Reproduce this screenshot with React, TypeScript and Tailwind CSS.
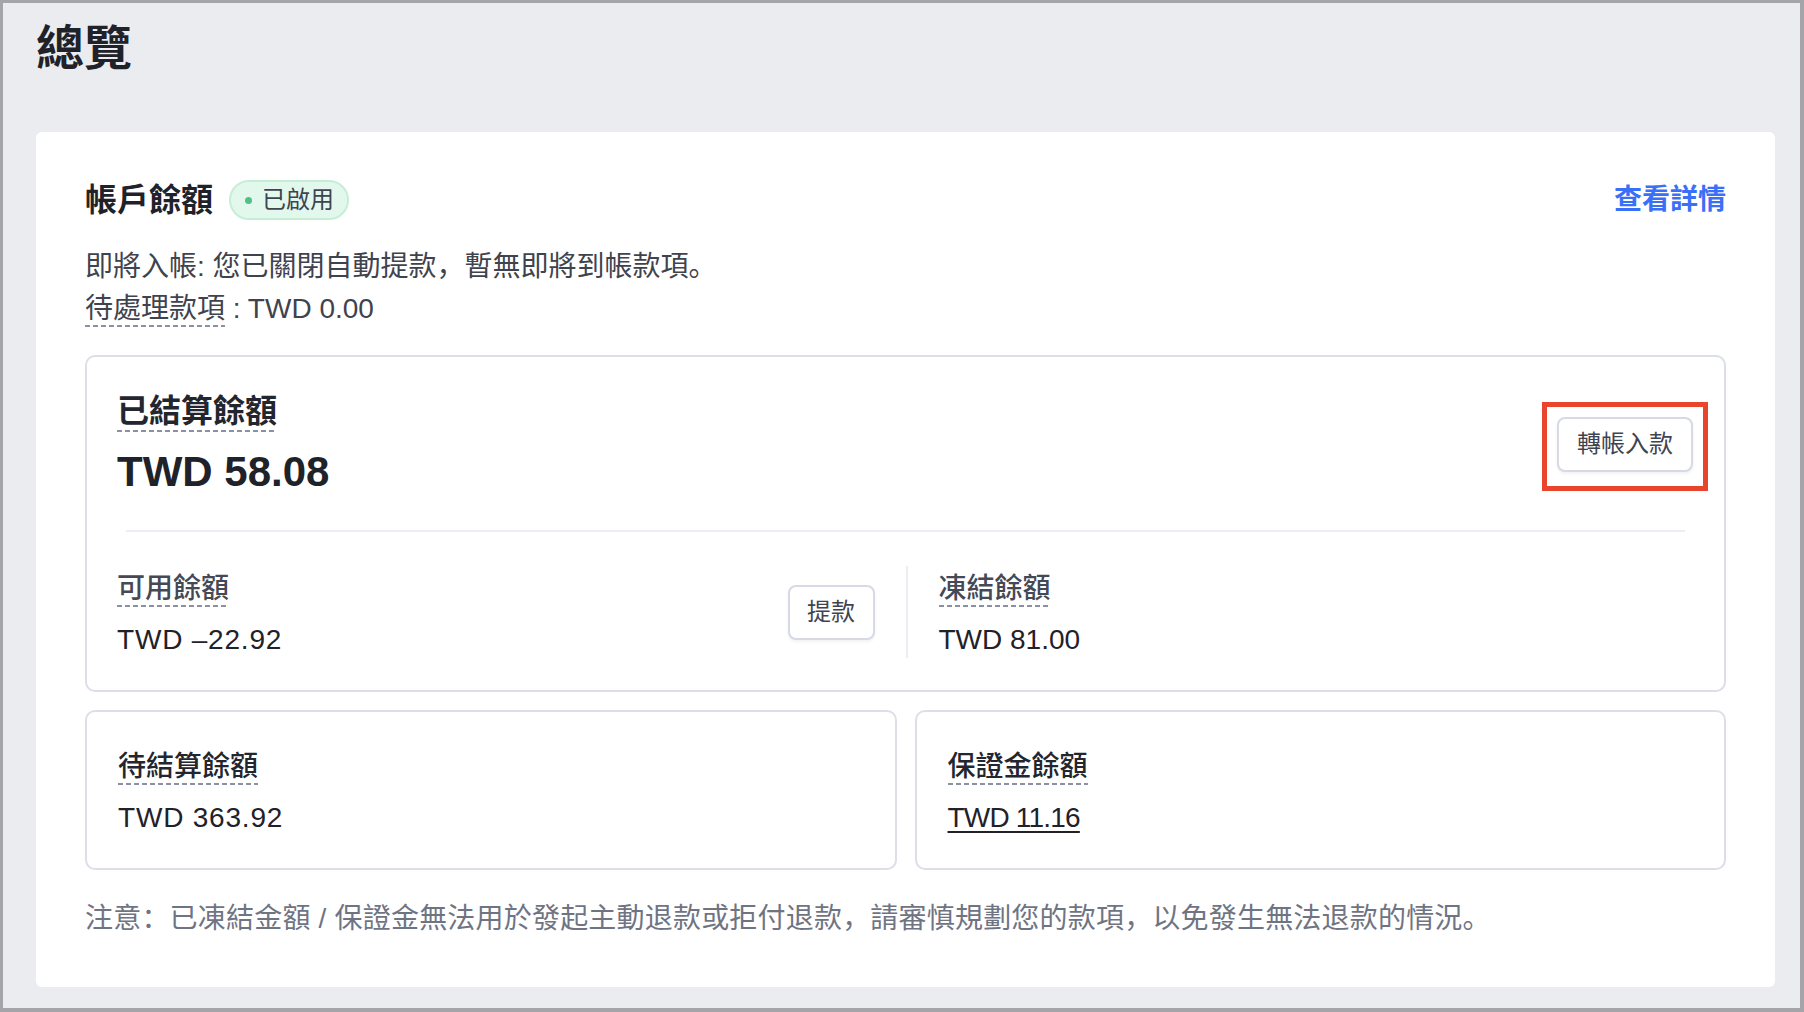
import type { ReactNode } from "react";

function TermLabel({ children, className = "" }: { children: ReactNode; className?: string }) {
  return (
    <span
      className={`inline-block leading-none bg-[linear-gradient(to_right,#8b91a2_62%,transparent_62%)] bg-[length:8px_2px] bg-repeat-x bg-[position:left_bottom] ${className}`}
    >
      {children}
    </span>
  );
}

function OutlineButton({ children, className = "" }: { children: ReactNode; className?: string }) {
  return (
    <button
      type="button"
      className={`flex items-center justify-center h-[55px] rounded-[8px] border-2 border-[#d7dae5] bg-white text-[24px] leading-none text-[#3f4451] shadow-[0_2px_3px_rgba(30,40,70,0.06)] ${className}`}
    >
      {children}
    </button>
  );
}

function BalanceBlock({
  label,
  amount,
  labelClass,
  amountClass = "",
}: {
  label: string;
  amount: string;
  labelClass: string;
  amountClass?: string;
}) {
  return (
    <div>
      <div className={`text-[28px] leading-none font-medium ${labelClass}`}>
        <TermLabel className="pb-[4px]">{label}</TermLabel>
      </div>
      <div className={`mt-[19px] text-[28px] leading-none text-[#1f2229] ${amountClass}`}>{amount}</div>
    </div>
  );
}

export default function App() {
  return (
    <div className="w-[1804px] h-[1012px] overflow-hidden bg-[#ebecf0] border-[#a4a4a9] border-l-[3px] border-t-[3px] border-r-[4px] border-b-[4px] pl-[33px] pr-[25px] pt-[10px] font-['Liberation_Sans','Noto_Sans_CJK_SC',sans-serif]">
      <h1 className="text-[48px] font-bold leading-[72px] text-[#1f2229]">總覽</h1>

      <div className="mt-[47px] w-[1739px] rounded-[6px] bg-white px-[49px] pt-[48px] pb-[47px]">
        {/* Header */}
        <div className="flex h-10 items-center justify-between">
          <div className="flex items-center">
            <h2 className="text-[32px] font-bold leading-none text-[#1f2229]">帳戶餘額</h2>
            <span className="ml-4 flex h-10 items-center rounded-full border-2 border-[#c6eed7] bg-[#e3f8ed] pl-[14px] pr-[13px]">
              <span className="h-[7px] w-[7px] rounded-full bg-[#4fc187]" />
              <span className="ml-[10px] text-[24px] leading-none text-[#3f4451]">已啟用</span>
            </span>
          </div>
          <a className="text-[28px] font-bold leading-none text-[#3a6ff7]">查看詳情</a>
        </div>

        <div className="mt-[26px] text-[28px] leading-[42px] text-[#3f434e]">
          <div>即將入帳: 您已關閉自動提款，暫無即將到帳款項。</div>
          <div>
            <TermLabel className="pb-[4px]">待處理款項</TermLabel> : TWD 0.00
          </div>
        </div>

        {/* Settled balance */}
        <div className="mt-[25px] rounded-[10px] border-2 border-[#dcdfe8]">
          <div className="flex items-center justify-between pl-[30px] pr-[31px] pt-[38px] pb-[37px]">
            <div>
              <div className="text-[32px] font-bold leading-none text-[#23262e]">
                <TermLabel className="pb-[5px]">已結算餘額</TermLabel>
              </div>
              <div className="mt-[19px] text-[42px] font-bold leading-none text-[#1f2229]">TWD 58.08</div>
            </div>
            <div className="relative">
              <OutlineButton className="px-[18px]">轉帳入款</OutlineButton>
              <div className="pointer-events-none absolute -left-[15px] -right-[15px] -top-[15px] -bottom-[19px] border-[5px] border-[#e8452c]" />
            </div>
          </div>

          <div className="mx-[39px] h-[2px] bg-[#eceef3]" />

          <div className="grid grid-cols-2 pt-[34px] pb-[32px]">
            <div className="flex h-[92px] items-center justify-between pl-[30px] pr-[31px]">
              <div className="mt-[4px]">
                <BalanceBlock
                  label="可用餘額"
                  amount="TWD –22.92"
                  labelClass="text-[#454956]"
                  amountClass="tracking-[0.8px]"
                />
              </div>
              <OutlineButton className="w-[87px]">提款</OutlineButton>
            </div>
            <div className="flex h-[92px] items-center border-l-2 border-[#eceef3] pl-[31px]">
              <div className="mt-[4px]">
                <BalanceBlock label="凍結餘額" amount="TWD 81.00" labelClass="text-[#454956]" />
              </div>
            </div>
          </div>
        </div>

        {/* Pending and deposit balances */}
        <div className="mt-[18px] grid grid-cols-2 gap-[18px]">
          <div className="rounded-[10px] border-2 border-[#dcdfe8] pl-[31px] pt-[41px] pb-[36px]">
            <BalanceBlock
              label="待結算餘額"
              amount="TWD 363.92"
              labelClass="text-[#23262e]"
              amountClass="tracking-[0.8px]"
            />
          </div>
          <div className="rounded-[10px] border-2 border-[#dcdfe8] pl-[31px] pt-[41px] pb-[36px]">
            <BalanceBlock
              label="保證金餘額"
              amount="TWD 11.16"
              labelClass="text-[#23262e]"
              amountClass="tracking-[-0.8px] underline decoration-2 underline-offset-[4px]"
            />
          </div>
        </div>

        <p className="mt-[28px] text-[28px] leading-[42px] tracking-[0.2px] text-[#6f7483]">
          注意：已凍結金額 / 保證金無法用於發起主動退款或拒付退款，請審慎規劃您的款項，以免發生無法退款的情況。
        </p>
      </div>
    </div>
  );
}
